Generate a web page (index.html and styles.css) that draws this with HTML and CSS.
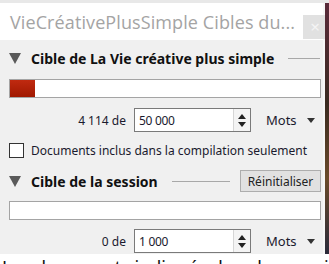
FILE: index.html
```html
<!DOCTYPE html>
<html lang="fr">
<head>
    <meta charset="UTF-8">
    <title>Cibles</title>
    <link rel="stylesheet" href="styles.css">
</head>
<body>
    <div class="top-strip"></div>
    <div class="desk">
        <div class="window">
            <div class="titlebar">
                <span class="title">VieCréativePlusSimple Cibles du...</span>
                <span class="close">×</span>
            </div>
            <div class="panel">
                <!-- Project target -->
                <div class="section-head">
                    <span class="arrow"></span>
                    <span class="section-title">Cible de La Vie créative plus simple</span>
                    <span class="rule"></span>
                </div>
                <div class="bar"><div class="fill" style="width: 8%"></div></div>
                <div class="count-row">
                    <span class="count">4 114 de</span>
                    <div class="spin">
                        <span class="spin-value">50 000</span>
                        <span class="spin-btns"><span class="up"></span><span class="down"></span></span>
                    </div>
                    <span class="unit">Mots</span>
                    <span class="unit-arrow"></span>
                </div>
                <label class="check-row">
                    <span class="box"></span>
                    <span>Documents inclus dans la compilation seulement</span>
                </label>

                <!-- Session target -->
                <div class="section-head session">
                    <span class="arrow"></span>
                    <span class="section-title">Cible de la session</span>
                    <span class="rule short"></span>
                    <button class="reset">Réinitialiser</button>
                </div>
                <div class="bar second"></div>
                <div class="count-row second">
                    <span class="count">0 de</span>
                    <div class="spin">
                        <span class="spin-value">1 000</span>
                        <span class="spin-btns"><span class="up"></span><span class="down"></span></span>
                    </div>
                    <span class="unit">Mots</span>
                    <span class="unit-arrow"></span>
                </div>
            </div>
        </div>
        <div class="edge"></div>
    </div>
    <div class="behind">Les documents indiqués dans la compilation</div>
</body>
</html>
```

FILE: styles.css
```css
body {
    margin: 0;
    background: #fff;
    font-family: 'Noto Sans', 'Open Sans', sans-serif;
    overflow: hidden;
}

.top-strip {
    height: 3px;
    background: #e8e8e8;
}

.desk {
    display: flex;
}

.window {
    width: 323px;
    border-right: 2px solid #f7f7f7;
}

.edge {
    width: 4px;
    background: linear-gradient(#5a2a3a, #3a2a20 40%, #6a4a2a 70%, #2a2a3a);
}

/* Title bar */
.titlebar {
    height: 37px;
    background: #fff;
    display: flex;
    align-items: center;
    justify-content: space-between;
    padding-left: 10px;
}

.title {
    font-family: 'Open Sans', sans-serif;
    font-size: 18px;
    color: #a4a4a4;
    letter-spacing: 0.1px;
    white-space: nowrap;
}

.close {
    width: 24px;
    height: 24px;
    margin-top: 10px;
    margin-right: -4px;
    background: #e1e1e1;
    color: #f4f4f4;
    font-size: 17px;
    line-height: 23px;
    text-align: center;
    flex-shrink: 0;
}

/* Panel */
.panel {
    background: #f0f0f0;
    padding: 9px 2px 1px 9px;
    font-size: 12px;
    color: #1a1a2e;
}

.section-head {
    display: flex;
    align-items: center;
    height: 19px;
}

.section-head.session {
    height: 22px;
    margin-top: 12px;
}

.arrow {
    width: 0;
    height: 0;
    border-left: 6px solid transparent;
    border-right: 6px solid transparent;
    border-top: 11px solid #5a5a5a;
    margin-right: 10px;
    flex-shrink: 0;
}

.section-title {
    font-weight: bold;
    font-size: 14px;
    color: #111;
    white-space: nowrap;
}

.rule {
    flex: 1;
    height: 1px;
    background: #a8a8a8;
    margin: 0 1px 0 14px;
}

.rule.short {
    margin-right: 10px;
}

.reset {
    font-family: inherit;
    font-size: 12px;
    color: #222;
    background: #e1e1e1;
    border: 1px solid #adadad;
    border-radius: 0;
    width: 81px;
    height: 22px;
    padding: 0;
    flex-shrink: 0;
}

.bar {
    height: 17px;
    margin-top: 11px;
    background: #fff;
    border: 1px solid #a4a4a4;
}

.bar.second {
    margin-top: 9px;
}

.fill {
    height: 100%;
    background: linear-gradient(#c02a10, #a01800);
}

.count-row {
    display: flex;
    align-items: center;
    height: 24px;
    margin-top: 10px;
}

.count-row.second {
    margin-top: 9px;
}

.count {
    width: 117px;
    flex-shrink: 0;
    text-align: right;
    margin-right: 8px;
}

.spin {
    width: 115px;
    height: 22px;
    flex-shrink: 0;
    border: 1px solid #7a7a7a;
    background: #fff;
    display: flex;
    align-items: center;
    justify-content: space-between;
}

.spin-value {
    padding-left: 4px;
    letter-spacing: -0.3px;
}

.spin-btns {
    width: 16px;
    height: 22px;
    border-left: 1px solid #d6d6d6;
    display: flex;
    flex-direction: column;
    align-items: center;
    justify-content: center;
    gap: 3px;
    background: #f4f4f4;
}

.up {
    border-left: 4px solid transparent;
    border-right: 4px solid transparent;
    border-bottom: 5px solid #222;
}

.down {
    border-left: 4px solid transparent;
    border-right: 4px solid transparent;
    border-top: 5px solid #222;
}

.unit {
    margin-left: 15px;
    font-size: 13px;
}

.unit-arrow {
    margin-left: 10px;
    border-left: 4px solid transparent;
    border-right: 4px solid transparent;
    border-top: 5px solid #333;
}

.check-row {
    display: flex;
    align-items: center;
    gap: 7px;
    height: 16px;
    margin-top: 10px;
    white-space: nowrap;
}

.box {
    width: 13px;
    height: 13px;
    flex-shrink: 0;
    border: 1px solid #333;
    background: #fff;
}

.behind {
    height: 10px;
    overflow: hidden;
    font-size: 18px;
    line-height: 26px;
    color: #111;
    padding-left: 2px;
    white-space: nowrap;
}
```
